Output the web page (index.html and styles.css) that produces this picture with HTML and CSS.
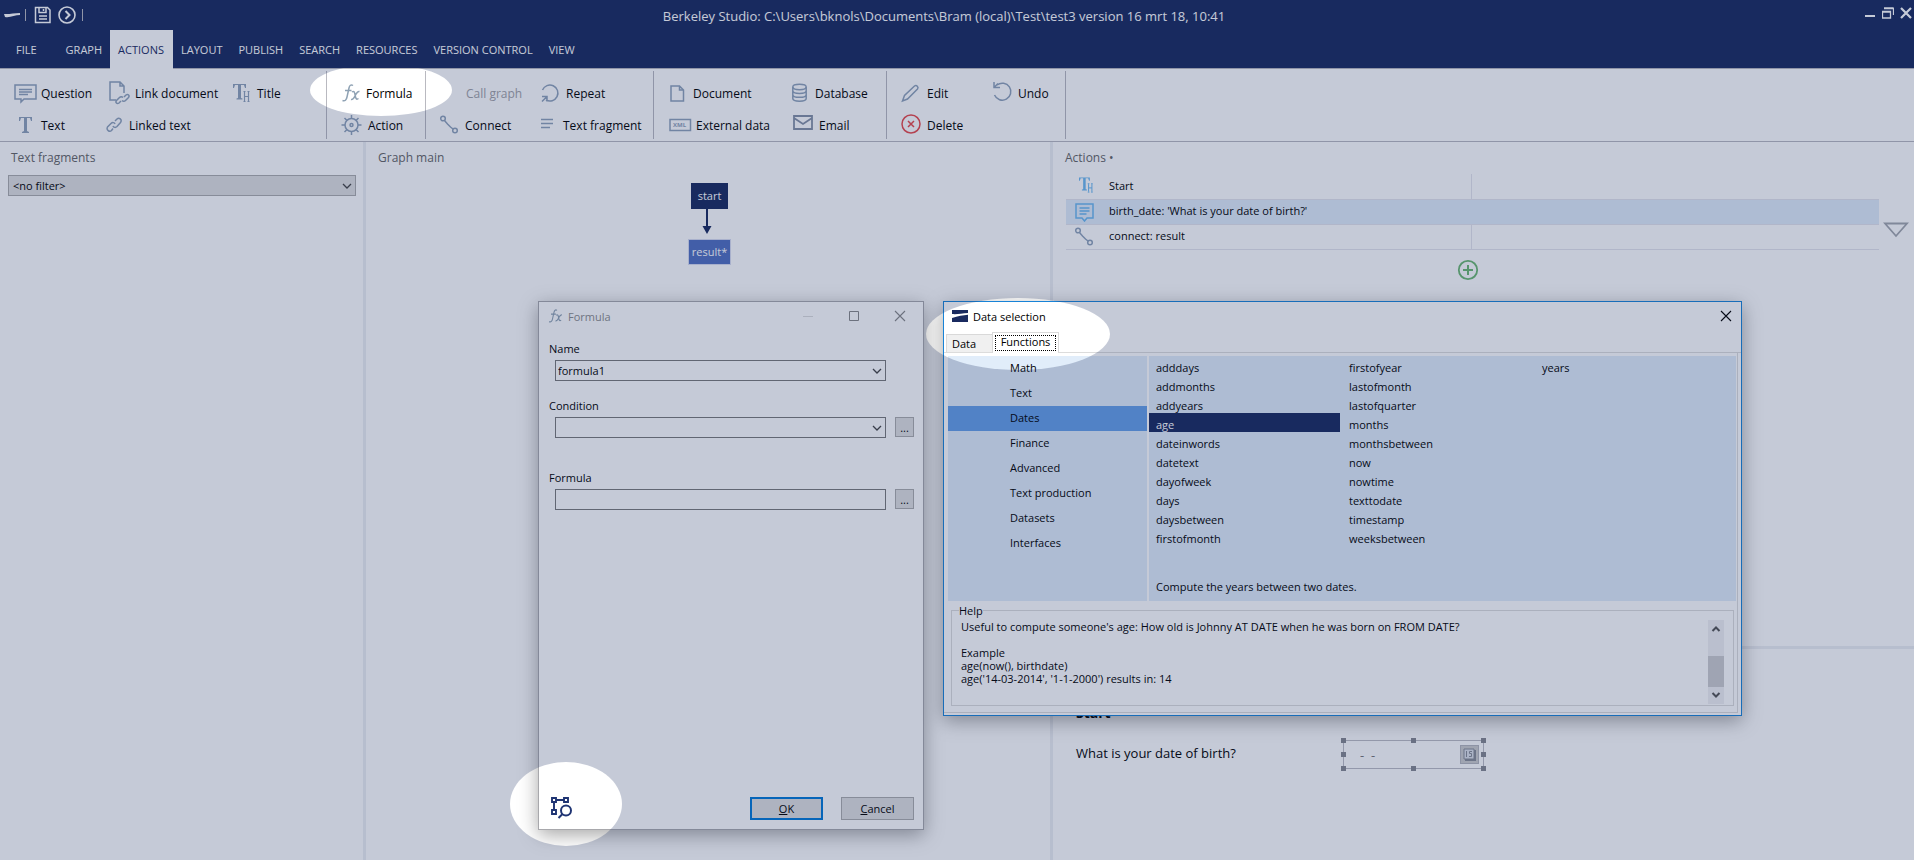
FILE: index.html
```
<!DOCTYPE html>
<html lang="en">
<head>
<meta charset="utf-8">
<title>Berkeley Studio</title>
<link rel="stylesheet" href="styles.css">
</head>
<body>
<svg class="defs" aria-hidden="true">
  <symbol id="i-th" viewBox="0 0 24 24"><path class="fill" d="M0 3h13v4h-1l-1-3H8v13l1.500.5v1H3.500v-1l1.500-.5V4H2L1 7H0z"/><path class="line2" d="M11.500 11v9M15.500 11v9M11.500 15.500h4M10.500 20.500h2M14.500 20.500h2M10.500 10.500h2M14.500 10.500h2"/></symbol>
  <symbol id="i-connect" viewBox="0 0 24 24"><circle class="line" cx="3" cy="5.500" r="2.300"/><circle class="line" cx="15" cy="17.500" r="2.300"/><path class="line" d="M4.500 7.500l3 3.500 3 3 2.500 2"/></symbol>
  <symbol id="i-fx" viewBox="0 0 24 24"><path class="fx" d="M12 4.500c-2-1.500-3.500 0-4 2.500L6 16c-.6 3-2 4.500-4.500 3.500M4 9.500h6.500M11 11c2-1.500 2.500 0 3 2.500.6 3 1 6 3.500 4M18.500 10.500c-2-.5-3 1.500-4.200 4C13 17 12 19 10 18.500"/></symbol>
  <symbol id="i-chev" viewBox="0 0 12 12"><path d="M2 4l4 4 4-4" fill="none" stroke="#444" stroke-width="1.300"/></symbol>
</svg>
<div class="app">
<header class="top">
  <div class="titlebar">
    <div class="quick">
      <svg width="17" height="10" viewBox="0 0 17 10"><path d="M0 4c5 .5 10-1 16-1v2C11 5 6 8 1 7z" fill="#fff"/></svg>
      <i class="bar bar-a"></i>
      <button aria-label="Save"><svg width="18" height="18" viewBox="0 0 18 18"><path d="M1.500 1.500h12l2.500 2.500v12.500H1.500zM5 1.500v5h7v-5M9.500 3v2M5 10h8M5 13h8" fill="none" stroke="#fff" stroke-width="1.500"/></svg></button>
      <button aria-label="Run"><svg width="18" height="18" viewBox="0 0 18 18"><circle cx="9" cy="9" r="8" fill="none" stroke="#fff" stroke-width="1.600"/><path d="M7.500 5l4 4-4 4" fill="none" stroke="#fff" stroke-width="2"/></svg></button>
      <i class="bar"></i>
    </div>
    <h1 class="app-title">Berkeley Studio: C:\Users\bknols\Documents\Bram (local)\Test\test3 version 16 mrt 18, 10:41</h1>
    <div class="winctl">
      <button aria-label="Minimize"><svg width="11" height="12" viewBox="0 0 11 12"><path d="M0 8h10v2H0z" fill="#fff"/></svg></button>
      <button aria-label="Restore"><svg width="12" height="12" viewBox="0 0 12 12"><path d="M2 1.500h9.500V8M.5 4.500h8v6.500h-8zM.5 5h8M2 1h9.500" fill="none" stroke="#fff" stroke-width="1.300"/></svg></button>
      <button aria-label="Close"><svg width="12" height="12" viewBox="0 0 12 12"><path d="M1 1l10 10M11 1L1 11" fill="none" stroke="#fff" stroke-width="2.200"/></svg></button>
    </div>
  </div>
  <nav class="tabs">
    <button class="tab file">FILE</button><button class="tab">GRAPH</button><button class="tab on">ACTIONS</button><button class="tab">LAYOUT</button><button class="tab">PUBLISH</button><button class="tab">SEARCH</button><button class="tab">RESOURCES</button><button class="tab">VERSION CONTROL</button><button class="tab">VIEW</button>
  </nav>
</header>

<div class="ribbon">
  <div class="group g1">
    <div class="col">
      <button class="cmd"><svg width="27" height="24" viewBox="0 0 27 24"><path class="line" d="M1 4h21v14H10l-3 3v-3H1zM5 8.500h13M5 11h13M5 13.500h9"/></svg>Question</button>
      <button class="cmd"><svg width="27" height="24" viewBox="0 0 27 24"><path class="fill" d="M5 4h13v4h-1l-1-3h-3v13l2 1v1H8v-1l2-1V5H7L6 8H5z"/></svg>Text</button>
    </div>
    <div class="col">
      <button class="cmd"><svg width="29" height="24" viewBox="0 0 29 24"><path class="line" d="M10 19H4V1h10l4 4v7M14 1v4h4"/><path class="line" d="M15 20l-2 2c-2 1.500-4-.5-2.500-2.500l3-3c1-1 2.500-1 3.500 0M18 16l2-2c2-1.500 4 .5 2.500 2.500l-3 3c-1 1-2.500 1-3.500 0"/></svg>Link document</button>
      <button class="cmd"><svg width="23" height="24" viewBox="0 0 23 24"><path class="line" d="M7 15.500l-1.500 2c-2 2-5.500-.5-4-3.500L5 10.500c1.500-1.500 3.500-1 4 .5M9 8l2-2c2-2 5.500.5 3.500 3.500L11 13.500c-1.500 1.500-3.500 1-4-.5"/></svg>Linked text</button>
    </div>
    <div class="col">
      <button class="cmd"><svg width="24" height="24"><use href="#i-th" width="24" height="24"/></svg>Title</button>
    </div>
  </div>
  <div class="group g2">
    <div class="col">
      <button class="cmd"><svg width="25" height="24"><use href="#i-fx" width="24" height="24"/></svg>Formula</button>
      <button class="cmd"><svg width="27" height="24" viewBox="0 0 27 24"><circle class="line" cx="10.500" cy="12" r="6.500"/><circle class="line" cx="10.500" cy="12" r="1.500"/><path class="line" d="M10.500 5.500V2M10.500 22v-3.500M4 12H.5M20.500 12H17M6 7.500L3.500 5M15 16.500l2.500 2.500M6 16.500L3.500 19M15 7.500L17.500 5"/></svg>Action</button>
    </div>
  </div>
  <div class="group g3">
    <div class="col">
      <button class="cmd" disabled><svg width="26" height="24"></svg>Call graph</button>
      <button class="cmd"><svg width="25" height="24"><use href="#i-connect" width="24" height="24"/></svg>Connect</button>
    </div>
    <div class="col">
      <button class="cmd"><svg width="25" height="24" viewBox="0 0 25 24"><path class="line" d="M1.500 9A8 8 0 1 1 5 19M1 15.500h5v5M6 15.500L1 20.500"/></svg>Repeat</button>
      <button class="cmd"><svg width="22" height="24" viewBox="0 0 22 24"><path class="line" d="M0 6.500h12M0 10.500h12M0 14.500h9"/></svg>Text fragment</button>
    </div>
  </div>
  <div class="group g4">
    <div class="col">
      <button class="cmd"><svg width="24" height="24" viewBox="0 0 24 24"><path class="line" d="M2 5h8.500l4 4v11H2zM10.500 5v4h4"/></svg>Document</button>
      <button class="cmd"><svg width="27" height="24" viewBox="0 0 27 24"><path class="line" d="M1 6.500h20.500v11H1z"/><text class="xml" x="4" y="14">XML</text></svg>External data</button>
    </div>
    <div class="col">
      <button class="cmd"><svg width="23" height="24" viewBox="0 0 23 24"><ellipse class="line" cx="7.500" cy="6" rx="6.700" ry="2.700"/><path class="line" d="M.8 6v11.500c0 3.500 13.400 3.500 13.400 0V6M.8 9.800c0 3.500 13.400 3.500 13.400 0M.8 13.700c0 3.500 13.400 3.500 13.400 0"/></svg>Database</button>
      <button class="cmd"><svg width="27" height="24" viewBox="0 0 27 24"><path d="M2 3h18v13H2zM2 5l9 6 9-6" fill="none" stroke="#8591a6" stroke-width="1.800"/></svg>Email</button>
    </div>
  </div>
  <div class="group g5">
    <div class="col">
      <button class="cmd"><svg width="26" height="24" viewBox="0 0 26 24"><path class="line" d="M1.500 20l2-5.500L13.500 5c2-1.500 4.500 1 3 3L6.500 18z"/></svg>Edit</button>
      <button class="cmd"><svg width="26" height="24" viewBox="0 0 26 24"><circle cx="10" cy="11" r="9" fill="none" stroke="#e8494b" stroke-width="1.500"/><path d="M7 8l6 6M13 8l-6 6" stroke="#e8494b" stroke-width="1.500"/></svg>Delete</button>
    </div>
    <div class="col">
      <button class="cmd"><svg width="25" height="24" viewBox="0 0 25 24"><path class="line" d="M4 4A8.500 8.500 0 1 1 1.500 14M1 1v5.500h6M1 6.500L5 2.500"/></svg>Undo</button>
    </div>
  </div>
</div>

<main class="panels">
  <section class="panel split">
    <h2 class="ptitle"><label for="filter">Text fragments</label></h2>
    <div class="combo filter"><select id="filter"><option>&lt;no filter&gt;</option></select><svg width="12" height="12"><use href="#i-chev"/></svg></div>
  </section>
  <section class="panel split graph">
    <h2 class="ptitle">Graph main</h2>
    <svg class="arrow" width="10" height="25" viewBox="0 0 10 25"><path d="M5 0v18" stroke="#192a5f" stroke-width="2"/><path d="M.5 17h9L5 25z" fill="#192a5f"/></svg>
    <button class="node start">start</button>
    <button class="node result">result*</button>
  </section>
  <section class="panel right">
    <div class="actions">
      <h2 class="ptitle">Actions •</h2>
      <div class="rows">
        <div class="tablewrap">
          <table class="acts">
            <tr><td class="ic"><svg class="sky" width="24" height="22" viewBox="-4 0 24 22"><use href="#i-th" width="20" height="20"/></svg></td><td class="what">Start</td><td></td></tr>
            <tr class="sel"><td class="ic"><svg class="sky" width="20" height="20" viewBox="0 0 20 20"><path class="line" d="M1 2h17v14h-6l-2.500 3L7 16H1zM4.500 6h10M4.500 9h10M4.500 12h7"/></svg></td><td class="what">birth_date: 'What is your date of birth?'</td><td></td></tr>
            <tr><td class="ic"><svg width="20" height="22" viewBox="0 1 20 22"><use href="#i-connect" width="24" height="24"/></svg></td><td class="what">connect: result</td><td></td></tr>
          </table>
          <button class="add" aria-label="Add action"><svg width="22" height="22" viewBox="0 0 22 22"><circle cx="11" cy="11" r="9.200" fill="none" stroke="#6cb872" stroke-width="1.800"/><path d="M11 6v10M6 11h10" stroke="#6cb872" stroke-width="2"/></svg></button>
        </div>
        <button class="down" aria-label="Move down"><svg width="26" height="16" viewBox="0 0 26 16"><path d="M2 1.500h22L13 14z" fill="none" stroke="#a3a7ae" stroke-width="1.800"/></svg></button>
      </div>
    </div>
    <div class="preview">
      <h3>Start</h3>
      <div class="field">
        <label for="dob">What is your date of birth?</label>
        <div class="datebox">
          <input id="dob" value="-  -">
          <button aria-label="Pick date"><svg width="15" height="15" viewBox="0 0 15 15"><path d="M2 2h10v10H2z" fill="#dde1e8" stroke="#888c96"/><path d="M13 3v10H3" fill="none" stroke="#888c96" stroke-width="2"/><path d="M4.500 4v6M10 4.500H7.500v2h2V9.500H7" fill="none" stroke="#888c96"/></svg></button>
          <i class="h tl"></i><i class="h tc"></i><i class="h tr"></i><i class="h ml"></i><i class="h mr"></i><i class="h bl"></i><i class="h bc"></i><i class="h br"></i>
        </div>
      </div>
    </div>
  </section>
</main>
</div>

<section class="dialog formula" role="dialog" aria-label="Formula">
  <header class="dhead">
    <svg width="18" height="18"><use href="#i-fx" width="18" height="18"/></svg>
    <h2>Formula</h2>
    <button aria-label="Minimize"><svg width="12" height="12" viewBox="0 0 12 12"><path d="M1 6.500h10" stroke="#ddd"/></svg></button>
    <button aria-label="Maximize"><svg width="12" height="12" viewBox="0 0 12 12"><path d="M1.500 1.500h9v9h-9z" fill="none" stroke="#888"/></svg></button>
    <button aria-label="Close"><svg width="12" height="12" viewBox="0 0 12 12"><path d="M1 1l10 10M11 1L1 11" stroke="#888" stroke-width="1.100"/></svg></button>
  </header>
  <form class="form">
    <label for="fname">Name</label>
    <div class="frow"><div class="combo"><select id="fname"><option>formula1</option></select><svg width="12" height="12"><use href="#i-chev"/></svg></div></div>
    <label for="fcond">Condition</label>
    <div class="frow"><div class="combo"><select id="fcond"><option></option></select><svg width="12" height="12"><use href="#i-chev"/></svg></div><button type="button" class="more" aria-label="Edit condition">...</button></div>
    <label for="fform" class="gap">Formula</label>
    <div class="frow"><input id="fform" type="text"><button type="button" class="more" aria-label="Edit formula">...</button></div>
    <div class="foot">
      <button type="button" class="inspect" aria-label="Data selection"><svg width="24" height="24" viewBox="0 0 24 24"><path d="M2 2h4v4H2zM14 2h4v4h-4zM2 14h4v4H2zM6 4h8M4 6v8" fill="none" stroke="#1f3473" stroke-width="1.900"/><circle cx="16" cy="14.500" r="5" fill="none" stroke="#1f3473" stroke-width="2"/><path d="M12.500 18L8.500 22" stroke="#1f3473" stroke-width="2"/></svg></button>
      <button type="button" class="push default"><u>O</u>K</button>
      <button type="button" class="push"><u>C</u>ancel</button>
    </div>
  </form>
</section>

<section class="dialog data" role="dialog" aria-label="Data selection">
  <header class="dhead">
    <svg width="16" height="12" viewBox="0 0 16 12"><path d="M0 0h16v12H0z" fill="#192a5f"/><path d="M0 4c5 .6 10-.8 16-1v1.800C11 5 6 6.500 0 8z" fill="#fff"/></svg>
    <h2>Data selection</h2>
    <button aria-label="Close"><svg width="12" height="12" viewBox="0 0 12 12"><path d="M1 1l10 10M11 1L1 11" stroke="#000" stroke-width="1.100"/></svg></button>
  </header>
  <div class="dtabs"><button class="dt">Data</button><button class="dt cur"><span>Functions</span></button></div>
  <div class="page">
    <div class="panes">
      <div class="cats">
        <button>Math</button><button>Text</button><button class="cur">Dates</button><button>Finance</button><button>Advanced</button><button>Text production</button><button>Datasets</button><button>Interfaces</button>
      </div>
      <div class="funcs">
        <div class="flist">
          <button>adddays</button><button>addmonths</button><button>addyears</button><button class="cur">age</button><button>dateinwords</button><button>datetext</button><button>dayofweek</button><button>days</button><button>daysbetween</button><button>firstofmonth</button>
          <button>firstofyear</button><button>lastofmonth</button><button>lastofquarter</button><button>months</button><button>monthsbetween</button><button>now</button><button>nowtime</button><button>texttodate</button><button>timestamp</button><button>weeksbetween</button>
          <button>years</button>
        </div>
        <p class="desc">Compute the years between two dates.</p>
      </div>
    </div>
    <fieldset class="help">
      <legend>Help</legend>
      <div class="hbody">
        <div class="htext">
          <p>Useful to compute someone's age: How old is Johnny AT DATE when he was born on FROM DATE?</p>
          <p class="ex">Example<br>age(now(), birthdate)<br>age('14-03-2014', '1-1-2000') results in: 14</p>
        </div>
        <div class="scroll">
          <button aria-label="Scroll up"><svg width="10" height="8" viewBox="0 0 10 8"><path d="M1.500 6L5 2.500 8.500 6" fill="none" stroke="#555" stroke-width="2"/></svg></button>
          <i class="thumb"></i>
          <button aria-label="Scroll down"><svg width="10" height="8" viewBox="0 0 10 8"><path d="M1.500 2L5 5.500 8.500 2" fill="none" stroke="#555" stroke-width="2"/></svg></button>
        </div>
      </div>
    </fieldset>
  </div>
</section>

<svg class="shade" aria-hidden="true">
  <mask id="spots"><rect width="100%" height="100%" fill="#fff"/><ellipse cx="381" cy="90" rx="71" ry="26"/><ellipse cx="1018" cy="334" rx="92" ry="36"/><ellipse cx="566" cy="804" rx="56" ry="42"/></mask>
  <rect width="100%" height="100%" fill="#192a5f" fill-opacity=".25" mask="url(#spots)"/>
</svg>
</body>
</html>
```
FILE: styles.css
```
* { box-sizing: border-box; }
body {
  margin: 0;
  position: relative;
  height: 100vh;
  overflow: hidden;
  background: #fff;
  color: #000;
  font: 11px/15px "Open Sans", "Noto Sans", sans-serif;
}
button, input, select { font: inherit; color: inherit; }
button { padding: 0; border: 0; background: none; text-align: left; }
h1, h2, h3, p { margin: 0; font-size: inherit; font-weight: normal; }
svg { display: block; flex: none; }
.defs { position: absolute; width: 0; height: 0; }
.line { fill: none; stroke: var(--icon, #8fa2ba); stroke-width: 1.500; }
.line2 { fill: none; stroke: var(--icon, #8fa2ba); stroke-width: 1.200; }
.fill { fill: var(--icon, #8fa2ba); }
.sky { --icon: #6cb8f0; }
.fx { fill: none; stroke: #8fa2b4; stroke-width: 1.500; }
.xml { font: bold 6px "Open Sans", sans-serif; fill: #8fa2ba; }
.app { display: flex; flex-direction: column; height: 100%; }

/* Title bar and tabs */
.top { background: #192a5f; color: #fff; border-bottom: 1px solid #b9b9c0; }
.titlebar { display: flex; height: 30px; align-items: flex-start; }
.quick { display: flex; align-items: center; width: 84px; padding: 6px 0 0 4px; }
.quick button { margin-right: 6px; }
.bar { width: 1px; height: 12px; background: #b9b9c0; }
.bar-a { margin: 0 8px 0 4px; }
.app-title { flex: 1; text-align: center; font-size: 13px; line-height: 18px; padding-top: 7px; }
.winctl { display: flex; justify-content: flex-end; gap: 6px; width: 110px; padding: 7px 2px 0 0; }
.tabs { display: flex; height: 38px; }
.tab { padding: 1px 8px 2px; margin-bottom: -1px; }
.tab.file { padding-left: 16px; padding-right: 21px; }
.tab.on { background: #fff; color: #192a5f; padding-right: 9px; }

/* Ribbon */
.ribbon { display: flex; height: 73px; border-bottom: 1px solid #b9b9c0; font-size: 12px; }
.group { display: grid; margin: 2px 0; padding-left: 14px; border-right: 1px solid #b9b9c0; }
.g1 { grid-template-columns: 92px 127px 93px; }
.g2 { grid-template-columns: 84px; }
.g3 { grid-template-columns: 101px 112px; }
.g4 { grid-template-columns: 123px 94px; padding-left: 15px; }
.g5 { grid-template-columns: 92px 72px; }
.col { display: flex; flex-direction: column; padding-top: 6px; }
.cmd { display: flex; align-items: center; height: 32px; white-space: nowrap; }
.cmd:disabled { color: #a2a2a6; }

/* Panels */
.panels { flex: 1; display: grid; grid-template-columns: 366fr 687fr 861fr; min-height: 0; }
.panel { min-width: 0; }
.split { border-right: 3px solid #edeff3; }
.ptitle { font-size: 12px; padding: 8px 0 0 12px; line-height: 16px; color: #666; }
.split:first-child .ptitle { padding-left: 11px; }
.combo { position: relative; }
.combo select, .frow input {
  display: block; width: 100%; height: 21px; padding: 0 2px; margin: 0;
  appearance: none; background: #fff; border: 1px solid #7a7a7a; border-radius: 0;
}
.combo svg { position: absolute; right: 3px; top: 5px; pointer-events: none; }
.filter { margin: 9px 7px 0 8px; }
.filter select { background: #e1e1e1; border-color: #adadad; padding-left: 4px; }
.graph { position: relative; }
.node { position: absolute; color: #fff; text-align: center; padding-bottom: 2px; }
.start { left: 325px; top: 41px; width: 37px; height: 26px; background: #192a5f; }
.result { left: 322px; top: 97px; width: 43px; height: 26px; background: #506fc0; border: 1px solid #d8ddf0; }
.arrow { position: absolute; left: 336px; top: 67px; }

.right { display: flex; flex-direction: column; }
.actions { height: 507px; border-bottom: 3px solid #edeff3; }
.rows { display: flex; padding: 8px 5px 0 13px; align-items: flex-start; }
.tablewrap { flex: 1; }
.acts { width: 100%; border-collapse: collapse; table-layout: fixed; }
.acts td { height: 25px; padding: 0 0 2px; border-bottom: 1px solid #e4e4ec; border-left: 1px solid #e4e4ec; }
.acts td:first-child, .acts .what { border-left: 0; }
.acts .ic { width: 43px; padding: 0 0 0 9px; }
.acts .what { width: 362px; }
.acts .sel td { background: #e1edfa; border-left: 0; }
.add { display: block; margin: 9px 0 0 391px; }
.down { margin: 48px 0 0 4px; }
.preview { padding: 55px 0 0 23px; font-size: 13px; line-height: 18px; }
.preview h3 { font-weight: bold; font-size: 14px; }
.field { display: flex; align-items: center; margin-top: 18px; }
.field label { width: 267px; padding-bottom: 4px; }
.datebox { position: relative; display: flex; align-items: center; width: 141px; height: 29px; border: 1px solid #bdbdc4; }
.datebox input { flex: 1; min-width: 0; border: 0; padding: 0 0 0 16px; background: none; color: #777; white-space: pre; }
.datebox button { width: 19px; height: 19px; margin-right: 4px; padding: 1px; background: #ccc; border: 1px solid #b4b6bc; }
.h { position: absolute; width: 5px; height: 5px; background: #868890; }
.tl, .tc, .tr { top: -3px; }
.ml, .mr { top: 11px; }
.bl, .bc, .br { bottom: -3px; }
.tl, .ml, .bl { left: -3px; }
.tc, .bc { left: 67px; }
.tr, .mr, .br { right: -3px; }

/* Dialogs */
.dialog { position: absolute; top: 301px; background: #fff; display: flex; flex-direction: column; box-shadow: 0 5px 18px rgba(0, 0, 0, .35); }
.formula { left: 538px; width: 386px; height: 529px; border: 1px solid #a8a8ac; }
.dhead { display: flex; align-items: center; height: 30px; padding: 0 9px 2px 8px; }
.dhead h2 { flex: 1; margin-left: 5px; }
.formula .dhead { padding: 0 17px 2px 9px; color: #8d8d8d; gap: 34px; }
.formula .dhead > svg { margin-right: -34px; }
.formula .dhead h2 { margin-left: 2px; }
.form { flex: 1; display: flex; flex-direction: column; padding: 9px 9px 9px 10px; }
.form label { margin-bottom: 4px; }
.frow { display: grid; grid-template-columns: 1fr 19px; gap: 9px; padding-left: 6px; margin-bottom: 17px; }
.form .gap { margin-top: 15px; }
.more { height: 20px; background: #e1e1e1; border: 1px solid #adadad; text-align: center; }
.foot { display: flex; gap: 18px; margin-top: auto; align-items: center; }
.inspect { margin: 0 auto 0 1px; }
.push { width: 73px; height: 23px; background: #e1e1e1; border: 1px solid #adadad; text-align: center; }
.default { border: 2px solid #0078d7; }

.data { left: 943px; width: 799px; height: 415px; border: 1px solid #1883d7; }
.dtabs { display: flex; align-items: flex-end; height: 21px; padding-left: 2px; border-bottom: 1px solid #dcdcdc; }
.dt { height: 18px; width: 46px; padding: 0 0 1px 5px; background: #f0f0f0; border: 1px solid #d9d9d9; border-bottom: 0; border-right: 0; }
.dt.cur { width: 67px; height: 21px; margin-bottom: -1px; padding: 2px; background: #fff; border-right: 1px solid #d9d9d9; }
.dt span { display: block; height: 16px; line-height: 12px; border: 1px dotted #000; text-align: center; }
.page { flex: 1; display: flex; flex-direction: column; margin: 0 3px 2px 0; padding: 3px 1px 6px 4px; border: 1px solid #dcdcdc; border-width: 0 1px 1px 0; }
.panes { display: grid; grid-template-columns: 199px 1fr; gap: 2px; height: 245px; }
.cats { display: flex; flex-direction: column; background: #e1edfa; }
.cats button { height: 25px; padding: 0 0 2px 62px; }
.cats .cur { background: #649fe8; }
.funcs { background: #e1edfa; }
.flist { display: grid; grid-auto-flow: column; grid-template-rows: repeat(10, 19px); grid-template-columns: repeat(3, 193px); }
.flist button { padding: 4px 0 0 7px; margin-right: 2px; line-height: 15px; }
.flist .cur { background: #192a5f; color: #fff; }
.desc { padding: 33px 0 0 7px; }
.help { flex: 1; min-width: 0; margin: 2px 2px 0 3px; padding: 2px 9px 1px; border: 1px solid #dcdcdc; }
.help legend { padding: 0; margin-left: -2px; }
.hbody { display: flex; height: 100%; line-height: 13px; }
.htext { flex: 1; }
.ex { margin-top: 13px; }
.scroll { display: flex; flex-direction: column; justify-content: space-between; width: 16px; padding: 5px 0; background: #f0f0f3; }
.scroll button { display: flex; justify-content: center; }
.thumb { height: 31px; margin-top: 18px; background: #cdcdcf; }

.shade { position: absolute; left: 0; top: 0; width: 100%; height: 100%; pointer-events: none; }
```
